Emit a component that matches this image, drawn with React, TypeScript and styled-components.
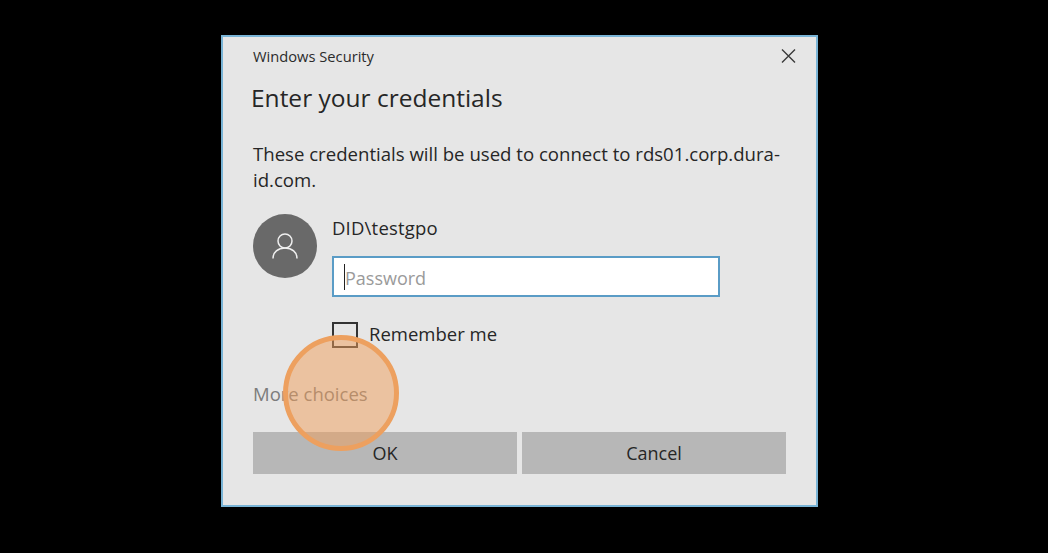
import React from "react";
import styled, { createGlobalStyle } from "styled-components";

const GlobalStyle = createGlobalStyle`
    html, body {
        margin: 0;
        padding: 0;
        background: #000;
    }
    body {
        font-family: "Open Sans", "Noto Sans", sans-serif;
    }
`;

const Screen = styled.div`
    width: 1048px;
    height: 553px;
    background: #000;
    display: flex;
    align-items: flex-start;
    padding: 35px 0 0 221px;
    box-sizing: border-box;
    overflow: hidden;
`;

const Dialog = styled.div`
    position: relative;
    width: 597px;
    height: 472px;
    box-sizing: border-box;
    background: #e6e6e6;
    border: 2px solid #79b4d6;
    padding: 8px 30px 0 29px;
    color: #222;
    display: flex;
    flex-direction: column;
`;

const TitleBar = styled.div`
    display: flex;
    justify-content: space-between;
    align-items: center;
    height: 22px;
    margin-right: -10px;
    padding-left: 1px;
`;

const AppName = styled.span`
    font-size: 14.7px;
    color: #2b2b2b;
`;

const CloseButton = styled.button`
    border: 0;
    background: none;
    padding: 0;
    width: 16px;
    height: 16px;
    color: #3a3a3a;
    display: flex;
`;

const Heading = styled.h1`
    margin: 13px 0 0 -1px;
    height: 36px;
    font-size: 24.5px;
    line-height: 36px;
    font-weight: 400;
    color: #262626;
`;

const Message = styled.p`
    margin: 25px 0 0 1px;
    width: 535px;
    font-size: 18.6px;
    line-height: 26px;
    color: #262626;
`;

const Account = styled.div`
    display: flex;
    gap: 15px;
    margin: 21px 0 0 1px;
`;

const Avatar = styled.div`
    width: 64px;
    height: 64px;
    border-radius: 50%;
    background: #696969;
    display: flex;
    align-items: center;
    justify-content: center;
    color: #efefef;
    flex-shrink: 0;
`;

const Fields = styled.div`
    display: flex;
    flex-direction: column;
`;

const UserName = styled.div`
    height: 28px;
    font-size: 18.5px;
    line-height: 28px;
    letter-spacing: 0.2px;
    color: #262626;
`;

const PasswordBox = styled.div`
    margin-top: 14px;
    width: 388px;
    height: 41px;
    box-sizing: border-box;
    background: #fff;
    border: 2px solid #5a9cc6;
    display: flex;
    align-items: center;
    padding-left: 10px;
`;

const Caret = styled.span`
    width: 1px;
    height: 26px;
    background: #222;
`;

const Placeholder = styled.span`
    font-size: 18px;
    padding-top: 3px;
    color: #9a9a9a;
`;

const RememberRow = styled.label`
    display: flex;
    align-items: center;
    gap: 11px;
    margin-top: 25px;
    height: 26px;
    font-size: 18.5px;
    color: #262626;
`;

const RememberText = styled.span`
    margin-bottom: 4px;
`;

const CheckBox = styled.span`
    width: 26px;
    height: 26px;
    box-sizing: border-box;
    border: 2px solid #333;
`;

const MoreChoices = styled.div`
    margin: 32px 0 0 1px;
    height: 28px;
    font-size: 18.5px;
    line-height: 28px;
    color: #7c7c7c;
`;

const ButtonRow = styled.div`
    display: grid;
    grid-template-columns: 264px 264px;
    gap: 5px;
    margin: 24px 0 0 1px;
`;

const DialogButton = styled.button`
    height: 42px;
    border: 0;
    padding: 0;
    background: #b7b7b7;
    font-family: inherit;
    font-size: 18px;
    color: #262626;
`;

const ClickMarker = styled.div`
    position: absolute;
    left: 60px;
    top: 298px;
    width: 116px;
    height: 116px;
    box-sizing: border-box;
    border-radius: 50%;
    background: rgba(240, 158, 90, 0.5);
    border: 5px solid #eda05f;
`;

export default function App() {
    return (
        <Screen>
            <GlobalStyle />
            <Dialog>
                <TitleBar>
                    <AppName>Windows Security</AppName>
                    <CloseButton aria-label="Close">
                        <svg width="16" height="16" viewBox="0 0 16 16" fill="none" stroke="currentColor" strokeWidth="1.4">
                            <path d="M2 1.500l13 13M15 1.500l-13 13" />
                        </svg>
                    </CloseButton>
                </TitleBar>
                <Heading>Enter your credentials</Heading>
                <Message>These credentials will be used to connect to rds01.corp.dura-id.com.</Message>
                <Account>
                    <Avatar>
                        <svg width="26" height="26" viewBox="0 0 26 26" fill="none" stroke="currentColor" strokeWidth="1.5">
                            <circle cx="13" cy="8" r="7" />
                            <path d="M1 25.500c0-6.500 5-10.500 12-10.500s12 4 12 10.500" />
                        </svg>
                    </Avatar>
                    <Fields>
                        <UserName>DID\testgpo</UserName>
                        <PasswordBox>
                            <Caret />
                            <Placeholder>Password</Placeholder>
                        </PasswordBox>
                        <RememberRow>
                            <CheckBox />
                            <RememberText>Remember me</RememberText>
                        </RememberRow>
                    </Fields>
                </Account>
                <MoreChoices>More choices</MoreChoices>
                <ButtonRow>
                    <DialogButton>OK</DialogButton>
                    <DialogButton>Cancel</DialogButton>
                </ButtonRow>
                <ClickMarker />
            </Dialog>
        </Screen>
    );
}
